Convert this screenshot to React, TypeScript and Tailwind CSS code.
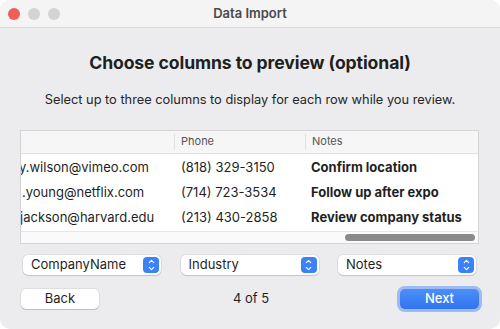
import { ChevronDown, ChevronUp } from "lucide-react"

const rows = [
    { email: "y.wilson@vimeo.com", shift: "-ml-[2px]", phone: "(818) 329-3150", note: "Confirm location" },
    { email: ".young@netflix.com", shift: "ml-px", phone: "(714) 723-3534", note: "Follow up after expo" },
    { email: "jackson@harvard.edu", shift: "-ml-px", phone: "(213) 430-2858", note: "Review company status" },
]

const Stepper = () => (
    <span className="flex flex-col items-center justify-center w-[16px] h-[16px] rounded-[4px] bg-[#3b82f6] text-white">
        <ChevronUp size={9} strokeWidth={3} className="-mb-[1px]" />
        <ChevronDown size={9} strokeWidth={3} className="-mt-[1px]" />
    </span>
)

const Select = ({ label }: { label: string }) => (
    <div className="flex items-center justify-between w-[138px] h-[20px] pl-[8px] pr-[2px] bg-white rounded-[5px] shadow-[0_0_0_0.5px_rgba(0,0,0,0.12),0_1px_1px_rgba(0,0,0,0.12)] text-[13px] text-[#1f1f1f]">
        <span>{label}</span>
        <Stepper />
    </div>
)

const App = () => {
    return (
        <div className="w-[500px] h-[329px] bg-white font-['Inter',sans-serif]">
            <div className="w-full h-full rounded-[10px] overflow-hidden bg-[#ececee] flex flex-col">
                {/* title bar */}
                <div className="relative flex items-center justify-center h-[28px] shrink-0 bg-[#f4f4f5] border-b border-[#d9d9db]">
                    <div className="absolute left-[8px] top-[8px] flex gap-[8px]">
                        <span className="w-[12px] h-[12px] rounded-full bg-[#ee5f57]" />
                        <span className="w-[12px] h-[12px] rounded-full bg-[#d4d4d6]" />
                        <span className="w-[12px] h-[12px] rounded-full bg-[#d4d4d6]" />
                    </div>
                    <span className="text-[13px] font-semibold text-[#4a4a4a]">Data Import</span>
                </div>

                <div className="flex flex-col px-[20px]">
                    <h1 className="mt-[22px] text-center text-[17.6px] font-bold text-[#1f1f1f] tracking-[-0.1px]">
                        Choose columns to preview (optional)
                    </h1>
                    <p className="mt-[14px] text-center text-[12.8px] text-[#262626]">
                        Select up to three columns to display for each row while you review.
                    </p>

                    {/* table */}
                    <div className="mt-[20px] w-[459px] h-[114px] border border-[#d4d4d6] bg-white overflow-hidden flex flex-col">
                        <div className="flex h-[23px] shrink-0 bg-[#f6f6f6] border-b border-[#e2e2e4] text-[11px] text-[#555]">
                            <div className="w-[154px] border-r border-[#e0e0e0] my-[3px]" />
                            <div className="w-[131px] pl-[6px] flex items-center border-r border-[#e0e0e0] my-[3px]">Phone</div>
                            <div className="flex-1 pl-[6px] flex items-center">Notes</div>
                        </div>
                        <div className="flex flex-col pt-[2px]">
                            {rows.map(r => (
                                <div key={r.phone} className="flex h-[25px] items-center text-[13px] text-[#1f1f1f] whitespace-nowrap">
                                    <div className="w-[153px] overflow-hidden">
                                        <span className={`block ${r.shift}`}>{r.email}</span>
                                    </div>
                                    <div className="w-[131px] pl-[7px]">{r.phone}</div>
                                    <div className="flex-1 pl-[6px] font-bold">{r.note}</div>
                                </div>
                            ))}
                        </div>
                        <div className="mt-auto h-[15px] border-t border-[#e6e6e6] bg-[#fafafa] flex items-center justify-end pr-[3px]">
                            <div className="w-[130px] h-[7px] rounded-full bg-[#8a8a8a]" />
                        </div>
                    </div>

                    {/* selects */}
                    <div className="mt-[11px] flex justify-between px-[3px] pr-[4px]">
                        <Select label="CompanyName" />
                        <Select label="Industry" />
                        <Select label="Notes" />
                    </div>

                    {/* footer */}
                    <div className="mt-[11px] flex items-center justify-between">
                        <button className="ml-[1px] w-[78px] h-[20px] bg-white rounded-[5px] shadow-[0_0_0_0.5px_rgba(0,0,0,0.12),0_1px_1px_rgba(0,0,0,0.15)] text-[13px] text-[#1f1f1f]">
                            Back
                        </button>
                        <span className="text-[13px] text-[#1f1f1f] pl-[6px]">4 of 5</span>
                        <div className="mr-[-2px] p-[3px] rounded-[8px] bg-[#9dbaf2]">
                            <button className="block w-[79px] h-[20px] rounded-[5px] bg-gradient-to-b from-[#4c8ff7] to-[#2f74f0] text-white text-[13px] font-medium">
                                Next
                            </button>
                        </div>
                    </div>
                </div>
            </div>
        </div>
    )
}

export default App
